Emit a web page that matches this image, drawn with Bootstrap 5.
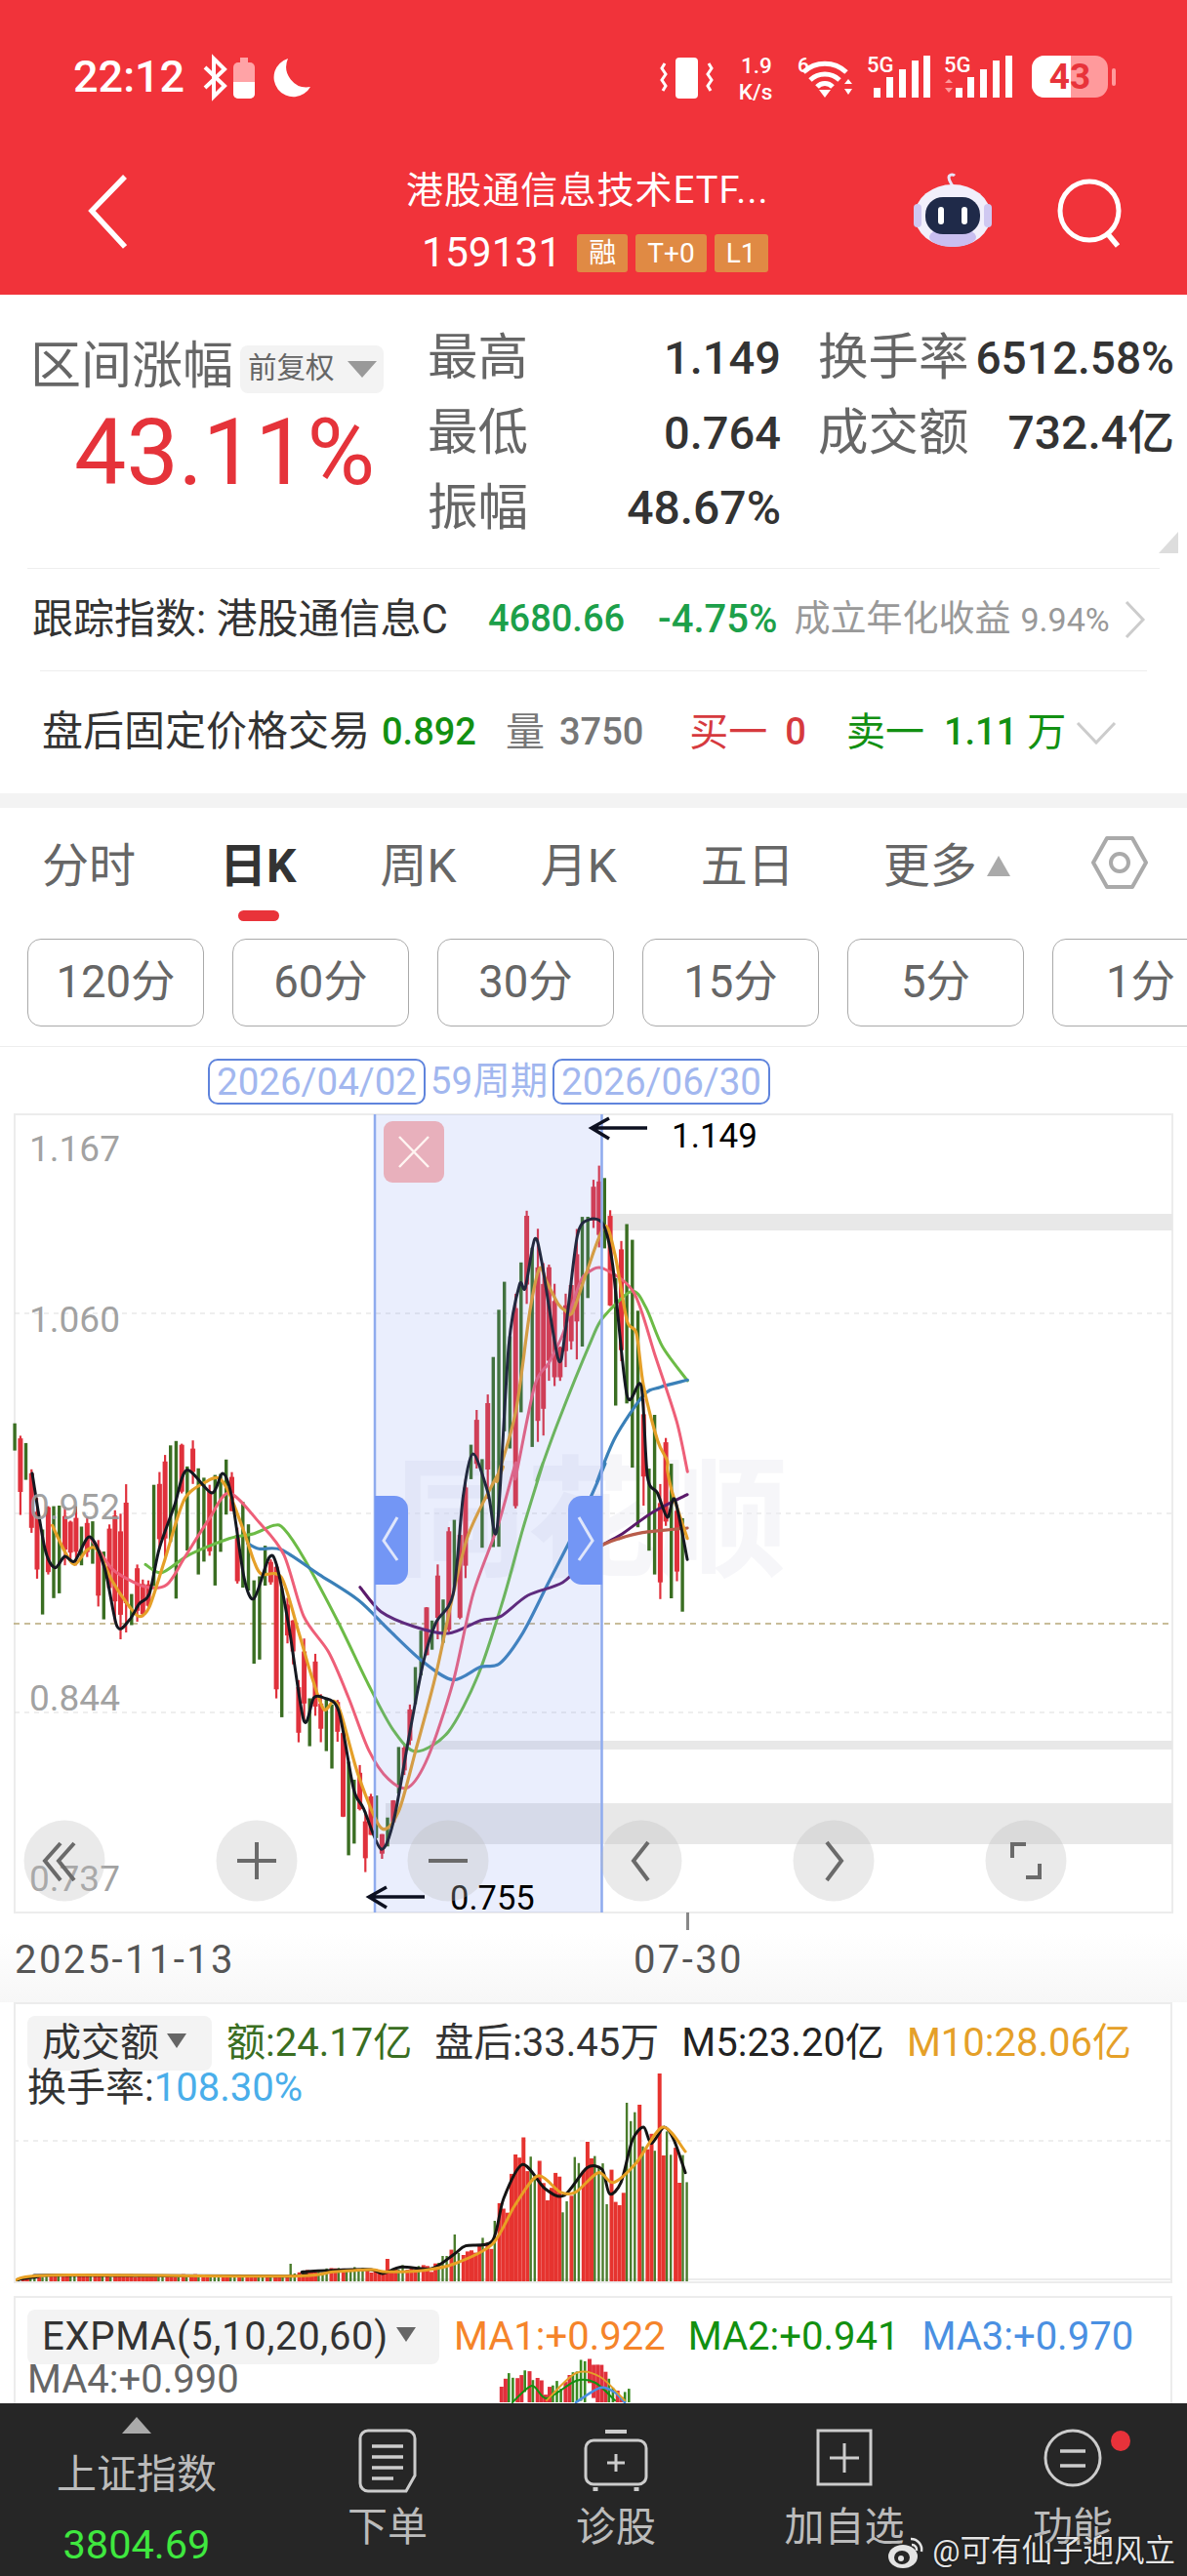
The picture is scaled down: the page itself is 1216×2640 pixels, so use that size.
<!doctype html>
<html lang="zh"><head><meta charset="utf-8">
<title>港股通信息技术ETF</title>
<link href="https://cdn.jsdelivr.net/npm/bootstrap@5.3.0/dist/css/bootstrap.min.css" rel="stylesheet">
<style>
html,body{margin:0;background:#fff}
body{width:1216px;height:2640px;overflow:hidden;font-family:Roboto,"Noto Sans CJK SC",sans-serif;color:#333;line-height:1.2}
svg{display:block}
.app-head{height:302px;background:#f1333a;color:#fff}
.status-row{padding:52px 68px 0 75px;height:106px}
.clock{font-size:45px;font-weight:500;margin-right:14px;line-height:50px}
.title-row{padding-left:90px;margin-top:67px}
.back-ico{margin-right:286px;margin-top:5px}
.title-box{width:374px}
.stock-name{font-size:38px;line-height:44px;white-space:nowrap;height:44px;letter-spacing:1.1px}
.code-line{margin-top:22px;padding-left:16px;gap:8px;height:40px}
.code-num{font-size:42.5px;line-height:40px;margin-right:8px}
.tag-box{background:#e08a44;border-radius:3px;font-size:28px;height:39px;line-height:39px;padding:0 12px}
.robot-ico{margin-left:144px;margin-top:4px}
.search-ico{margin-left:63px;margin-top:10px}
.stat-panel{height:280px;position:relative}
.stat-left{width:438px;padding:47px 0 0 31px}
.range-title{font-size:52px;line-height:54px;color:#666;white-space:nowrap}
.fq-pill{background:#f3f3f3;border-radius:8px;height:49px;width:147px;margin-left:7px;font-size:29.5px;color:#666;padding-left:8px;gap:13px;margin-top:4px}
.tri-d{width:0;height:0;border-left:15px solid transparent;border-right:15px solid transparent;border-top:17px solid #999}
.range-val{font-size:95px;line-height:100px;color:#e5333a;margin-top:11px;padding-left:45px}
.stat-grid{display:grid;grid-template-columns:362px 365px;column-gap:38px;grid-auto-rows:77px;padding-top:26px}
.stat-cell{display:flex;justify-content:space-between;align-items:center}
.stat-k{font-size:51.5px;color:#666;line-height:1}
.stat-v{font-size:47px;font-weight:500;color:#333;line-height:1}
.stat-v2{font-size:46px}
.stat-v3{font-size:48px}
.corner{position:absolute;right:9px;bottom:15px;width:0;height:0;border-left:20px solid transparent;border-bottom:22px solid #ddd}
.hair1{height:1px;background:#eee;margin:0 28px}
.hair2{height:1px;background:#eee;margin:0 41px}
.track-row{height:104px;padding-left:33px;white-space:nowrap}
.t41{font-size:42px;color:#333}
.val38{font-size:38px;font-weight:500}
.c-up{color:#1ca04a}.c-dk{color:#129012}.c-rd{color:#d63a3e}.c-mut{color:#777}
.fade37{font-size:37px;color:#999}.fade32{font-size:34px;color:#999}
.late-row{height:125px;padding-left:43px;white-space:nowrap}
.band{height:15px;background:#f3f3f3}
.tab-row{padding:31px 0 0 43px;gap:86px;height:101px;font-size:48px;color:#666;white-space:nowrap;position:relative}
.tab-on{color:#333;font-weight:700;position:relative}
.tab-on i{position:absolute;left:19px;top:74px;width:42px;height:11px;border-radius:6px;background:#e9333a}
.tri-u{display:inline-block;width:0;height:0;border-left:12px solid transparent;border-right:12px solid transparent;border-bottom:21px solid #aaa;margin-left:10px;vertical-align:6px}
.gear-ico{position:absolute;left:1118px;top:28px}
.period-row{padding-left:28px;gap:29px;overflow:hidden;height:111px;border-bottom:1px solid #eee;margin-top:33px;padding-bottom:21px;box-sizing:border-box}
.period-btn{flex:0 0 181px;height:90px;border:1px solid #aaa;border-radius:14px;font-size:45.5px;color:#666;background:#fff}
.range-row{height:67px;padding:12px 0 0 213px;font-size:38px;color:#a2b7ef;white-space:nowrap}
.date-pill{border:2px solid #5f84dc;border-radius:10px;height:47px;line-height:44px;width:223px;text-align:center;font-size:38.5px}
.cycle-txt{width:130px;text-align:center;line-height:46px;font-size:38.5px}
.axis-row{height:72px;background:linear-gradient(#fff,#f7f7f7);padding-left:15px;font-size:40px;color:#555;letter-spacing:2.4px;white-space:nowrap;line-height:58px}
.axis-end{margin-left:408px}
.sub-panel{position:relative;margin:0 15px 13px 14px;border:2px solid #ececec;overflow:hidden;background:#fff}
.sub-vol{height:288px}
.sub-ema{height:110px;border-bottom:0;margin-bottom:0}
.sub-art{position:absolute;left:-2px;top:-2px}
.sub-txt{position:relative;padding:12px 0 0 12px;font-size:40px;white-space:nowrap;line-height:1.2}
.sel-pill{background:#f3f3f3;border-radius:8px;height:56px;padding-left:15px;color:#333;gap:8px}
.sel-vol{width:189px}
.sel-ema{width:422px;letter-spacing:.7px}
.tri-s{width:0;height:0;border-left:10px solid transparent;border-right:10px solid transparent;border-top:15px solid #666;margin-bottom:6px}
.leg-row{gap:23px}
.g1{color:#3a6e22}.o1{color:#e5a028}.b1{color:#4aaeea}.k1{color:#222}
.o2{color:#f5842a}.g2{color:#129010}.b2{color:#4a90e2}.m2{color:#666}
.dock{height:179px;background:#262626;color:#bbb;display:grid;grid-template-columns:280px repeat(4,234px);position:relative;font-size:41px}
.dock-a{text-align:center;padding-top:14px}
.dock-tri{width:0;height:0;margin:0 auto;border-left:15px solid transparent;border-right:15px solid transparent;border-bottom:17px solid #aaa}
.dock-name{margin-top:17px;line-height:50px}
.dock-num{color:#3fe83f;font-size:41.5px;line-height:50px;margin-top:22px}
.dock-b{text-align:center;padding-top:26px}
.dock-b svg{margin:0 auto}
.dock-lbl{line-height:50px;margin-top:10px}
.wm{position:absolute;right:12px;bottom:8px;color:#e4e4e4;font-size:31.5px;gap:8px;white-space:nowrap;text-shadow:0 0 2px #000}
</style></head>
<body>
<header class="app-head">
  <div class="status-row d-flex justify-content-between align-items-center">
    <div class="d-flex align-items-center">
      <span class="clock">22:12</span>
      <svg width="120" height="50" viewBox="212 52 120 50">
        <path d="M219 67l20 19-11 11V58l11 11-20 19" fill="none" stroke="#fff" stroke-width="4"/>
        <rect x="248" y="62" width="22" height="37" rx="5" fill="#ffa3a6"/><path d="M248 82h22v12a5 5 0 0 1-5 5h-12a5 5 0 0 1-5-5z" fill="#fff"/><rect x="255" y="57" width="8" height="5" fill="#ffa3a6"/>
        <path d="M304 58a20 20 0 1 0 23 29 21 21 0 0 1-23-29z" fill="#fff"/>
      </svg>
    </div>
    <svg width="472" height="54" viewBox="676 50 472 54" font-family="Roboto" fill="#fff">
      <rect x="692" y="57" width="23" height="42" rx="4" fill="#fff"/>
      <path d="M681 63l-3 5 4 6-4 6 4 6-3 5M726 63l3 5-4 6 4 6-4 6 3 5" fill="none" stroke="#fff" stroke-width="3"/>
      <text x="775" y="73" font-size="22.5" font-weight="500" text-anchor="middle">1.9</text>
      <text x="774" y="100" font-size="22.5" font-weight="500" text-anchor="middle">K/s</text>
      <text x="817" y="72" font-size="21" font-weight="500">6</text>
      <g fill="none" stroke="#fff" stroke-width="5"><path d="M823 72a32 32 0 0 1 44 0"/><path d="M830 80a22 22 0 0 1 30 0"/><path d="M837 87a11 11 0 0 1 16 0"/></g>
      <path d="M839 90h12l-6 8z"/><path d="M865 84l4-5 4 5zM865 89l4 6 4-6z"/>
      <text x="888" y="72" font-size="22" font-weight="500">5G</text>
      <rect x="895" y="88" width="7" height="10"/><rect x="908" y="77" width="7" height="21"/><rect x="921" y="69" width="7" height="29"/><rect x="934" y="60" width="7" height="38"/><rect x="946" y="55" width="7" height="43"/>
      <text x="967" y="72" font-size="22" font-weight="500">5G</text>
      <path d="M968 83l4-4 4 4zM968 88l4 5 4-5z" fill="#ff9a9c"/>
      <rect x="979" y="88" width="7" height="10"/><rect x="991" y="77" width="7" height="21"/><rect x="1004" y="69" width="7" height="29"/><rect x="1017" y="60" width="7" height="38"/><rect x="1030" y="55" width="7" height="43"/>
      <rect x="1057" y="55" width="78" height="43" rx="13" fill="#ff9a9c"/>
      <path d="M1070 55h27v43h-27a13 13 0 0 1-13-13V68a13 13 0 0 1 13-13z"/>
      <rect x="1139" y="68" width="4" height="18" rx="2" fill="#ff9a9c"/>
      <text x="1096" y="89" font-size="37" font-weight="700" fill="#e8333a" text-anchor="middle">43</text>
    </svg>
  </div>
  <div class="title-row d-flex align-items-start">
    <svg class="back-ico" width="40" height="78" viewBox="0 0 40 78"><path d="M38 3L4 38l34 37" fill="none" stroke="#fff" stroke-width="5.5"/></svg>
    <div class="title-box">
      <div class="stock-name">港股通信息技术ETF...</div>
      <div class="code-line d-flex align-items-center"><span class="code-num">159131</span><span class="tag-box">融</span><span class="tag-box">T+0</span><span class="tag-box">L1</span></div>
    </div>
    <svg class="robot-ico" width="84" height="76" viewBox="0 0 84 76">
      <path d="M42 14c-2-4-4-6-4-9s4-4 6-2" fill="none" stroke="#e9e4f8" stroke-width="3"/>
      <ellipse cx="42" cy="44" rx="39" ry="32" fill="#f1effb"/><ellipse cx="42" cy="66" rx="24" ry="10" fill="#c9bff0"/>
      <rect x="2" y="32" width="8" height="24" rx="4" fill="#cfc8f1"/><rect x="74" y="32" width="8" height="24" rx="4" fill="#cfc8f1"/>
      <rect x="14" y="25" width="56" height="38" rx="18" fill="#1f2a49"/>
      <rect x="27" y="35" width="6" height="18" rx="3" fill="#fff"/><rect x="51" y="35" width="6" height="18" rx="3" fill="#fff"/>
    </svg>
    <svg class="search-ico" width="70" height="72" viewBox="0 0 70 72"><circle cx="35" cy="33" r="30" fill="none" stroke="#fff" stroke-width="5"/><path d="M54 57l10 12" stroke="#fff" stroke-width="5.5"/></svg>
  </div>
</header>

<section class="stat-panel d-flex">
  <div class="stat-left">
    <div class="d-flex align-items-center"><span class="range-title">区间涨幅</span><div class="fq-pill d-flex align-items-center"><span>前复权</span><i class="tri-d"></i></div></div>
    <div class="range-val">43.11%</div>
  </div>
  <div class="stat-grid">
    <div class="stat-cell"><span class="stat-k">最高</span><span class="stat-v">1.149</span></div>
    <div class="stat-cell"><span class="stat-k">换手率</span><span class="stat-v stat-v2">6512.58%</span></div>
    <div class="stat-cell"><span class="stat-k">最低</span><span class="stat-v">0.764</span></div>
    <div class="stat-cell"><span class="stat-k">成交额</span><span class="stat-v stat-v3">732.4亿</span></div>
    <div class="stat-cell"><span class="stat-k">振幅</span><span class="stat-v stat-v3">48.67%</span></div>
  </div>
  <i class="corner"></i>
</section>
<div class="hair1"></div>
<div class="track-row d-flex align-items-center">
  <span class="t41">跟踪指数: 港股通信息C</span>
  <span class="val38 c-up" style="margin-left:41px">4680.66</span>
  <span class="val38 c-up" style="margin-left:34px;font-size:40px">-4.75%</span>
  <span class="fade37" style="margin-left:17px">成立年化收益</span>
  <span class="fade32" style="margin-left:10px">9.94%</span>
  <svg width="26" height="40" viewBox="0 0 26 40" style="margin-left:13px"><path d="M4 2l17 18L4 38" fill="none" stroke="#ccc" stroke-width="3"/></svg>
</div>
<div class="hair2"></div>
<div class="late-row d-flex align-items-center">
  <span class="t41">盘后固定价格交易</span>
  <span class="val38 c-dk" style="margin-left:12px">0.892</span>
  <span class="c-mut" style="font-size:40px;margin-left:30px">量</span>
  <span class="val38 c-mut" style="margin-left:15px">3750</span>
  <span class="c-rd" style="font-size:40px;margin-left:47px">买一</span>
  <span class="val38 c-rd" style="margin-left:18px">0</span>
  <span class="c-dk" style="font-size:40px;margin-left:41px">卖一</span>
  <span class="val38 c-dk" style="margin-left:20px">1.11</span>
  <span class="c-dk" style="font-size:40px;margin-left:10px">万</span>
  <svg width="42" height="28" viewBox="0 0 42 28" style="margin-left:10px"><path d="M2 4l19 20L40 4" fill="none" stroke="#ccc" stroke-width="3"/></svg>
</div>
<div class="band"></div>
<nav class="tab-row d-flex">
  <span>分时</span><span class="tab-on">日K<i></i></span><span>周K</span><span>月K</span><span>五日</span><span style="margin-left:5px">更多<i class="tri-u"></i></span>
  <svg class="gear-ico" width="58" height="56" viewBox="0 0 58 56"><path d="M16 3h26l14 25-14 25H16L2 28z" fill="none" stroke="#aaa" stroke-width="4" stroke-linejoin="round"/><circle cx="29" cy="28" r="9" fill="none" stroke="#aaa" stroke-width="4"/></svg>
</nav>
<div class="period-row d-flex">
  <button class="period-btn">120分</button><button class="period-btn">60分</button><button class="period-btn">30分</button><button class="period-btn">15分</button><button class="period-btn">5分</button><button class="period-btn">1分</button>
</div>
<div class="range-row d-flex"><span class="date-pill">2026/04/02</span><span class="cycle-txt">59周期</span><span class="date-pill">2026/06/30</span></div>

<svg id="kchart" width="1216" height="840" viewBox="0 1140 1216 840" font-family="Roboto"></svg>
<div class="axis-row"><span>2025-11-13</span><span class="axis-end">07-30</span></div>

<section class="sub-panel sub-vol">
  <svg id="volart" class="sub-art" width="1187" height="288" viewBox="14 2052 1187 288"></svg>
  <div class="sub-txt">
    <div class="d-flex leg-row align-items-center"><div class="sel-pill sel-vol d-flex align-items-center"><span>成交额</span><i class="tri-s"></i></div><span class="g1" style="margin-left:-8px">额:24.17亿</span><span>盘后:33.45万</span><span class="k1">M5:23.20亿</span><span class="o1">M10:28.06亿</span></div>
    <div style="margin-top:-6px;line-height:48px">换手率:<span class="b1">108.30%</span></div>
  </div>
</section>
<section class="sub-panel sub-ema">
  <svg id="emaart" class="sub-art" width="1187" height="110" viewBox="14 2353 1187 110"></svg>
  <div class="sub-txt">
    <div class="d-flex leg-row align-items-center"><div class="sel-pill sel-ema d-flex align-items-center"><span>EXPMA(5,10,20,60)</span><i class="tri-s"></i></div><span class="o2" style="margin-left:-8px">MA1:+0.922</span><span class="g2">MA2:+0.941</span><span class="b2">MA3:+0.970</span></div>
    <div class="m2" style="margin-top:-8px;line-height:48px">MA4:+0.990</div>
  </div>
</section>

<footer class="dock">
  <div class="dock-a"><div class="dock-tri"></div><div class="dock-name">上证指数</div><div class="dock-num">3804.69</div></div>
  <div class="dock-b"><svg width="60" height="66" viewBox="0 0 60 66"><path d="M10 2h40a8 8 0 0 1 8 8v38l-9 16H10a8 8 0 0 1-8-8V10a8 8 0 0 1 8-8z" fill="none" stroke="#ccc" stroke-width="3"/><path d="M14 18h32M14 29h32M14 40h32M14 51h22" stroke="#ccc" stroke-width="3.5"/></svg><div class="dock-lbl">下单</div></div>
  <div class="dock-b"><svg width="66" height="66" viewBox="0 0 66 66"><path d="M22 3h22" stroke="#ccc" stroke-width="4"/><rect x="2" y="12" width="62" height="45" rx="8" fill="none" stroke="#ccc" stroke-width="3"/><path d="M33 26v18M24 35h18" stroke="#ccc" stroke-width="3"/><path d="M12 60v4M54 60v4" stroke="#ccc" stroke-width="5"/></svg><div class="dock-lbl">诊股</div></div>
  <div class="dock-b"><svg width="58" height="66" viewBox="0 0 58 66"><rect x="2" y="2" width="54" height="55" fill="none" stroke="#ccc" stroke-width="3"/><path d="M29 15v30M14 30h30" stroke="#ccc" stroke-width="3"/></svg><div class="dock-lbl">加自选</div></div>
  <div class="dock-b"><svg width="60" height="66" viewBox="0 0 60 66"><circle cx="30" cy="30" r="28" fill="none" stroke="#ccc" stroke-width="3"/><path d="M17 23h26M17 38h26" stroke="#ccc" stroke-width="3.5"/></svg><div class="dock-lbl">功能</div></div>
  <i class="position-absolute rounded-circle" style="left:1138px;top:28px;width:20px;height:21px;background:#e8323a"></i>
  <div class="wm d-flex align-items-center">
    <svg width="38" height="36" viewBox="0 0 38 36"><ellipse cx="16" cy="23" rx="15" ry="12" fill="#e4e4e4"/><ellipse cx="15" cy="24" rx="8" ry="7" fill="#262626"/><circle cx="14" cy="25" r="3" fill="#e4e4e4"/><path d="M24 5a11 11 0 0 1 11 13M25 11a5 5 0 0 1 5 6" fill="none" stroke="#e4e4e4" stroke-width="2.5"/></svg>
    <span>@可有仙子迎风立</span>
  </div>
</footer>

<script>
(function(){
var seed=2026;function R(){seed=(seed*1664525+1013904223)%4294967296;return seed/4294967296}
function A(a){var o=[];for(var i=0;i<a.length;i+=2)o.push([a[i]/1.96,1500+a[i+1]/3]);return o}
function B(a){var o=[];for(var i=0;i<a.length;i+=2)o.push([a[i]/2.063,1070+a[i+1]/3]);return o}
function C(a){var o=[];for(var i=0;i<a.length;i+=2)o.push([a[i]/1.289,2020+a[i+1]/3]);return o}
function smooth(pts,col,w){var d='M'+pts[0][0].toFixed(1)+' '+pts[0][1].toFixed(1);
 for(var i=0;i<pts.length-1;i++){var p0=pts[i-1]||pts[i],p1=pts[i],p2=pts[i+1],p3=pts[i+2]||p2;
  d+='C'+(p1[0]+(p2[0]-p0[0])/7).toFixed(1)+' '+(p1[1]+(p2[1]-p0[1])/7).toFixed(1)+' '+(p2[0]-(p3[0]-p1[0])/7).toFixed(1)+' '+(p2[1]-(p3[1]-p1[1])/7).toFixed(1)+' '+p2[0].toFixed(1)+' '+p2[1].toFixed(1)}
 return '<path d="'+d+'" fill="none" stroke="'+col+'" stroke-width="'+w+'" stroke-linejoin="round" stroke-linecap="round"/>'}
function lerp(t,x){if(x<=t[0][0])return t[0][1];for(var i=1;i<t.length;i++)if(x<=t[i][0]){var a=t[i-1],b=t[i];return a[1]+(b[1]-a[1])*(x-a[0])/(b[0]-a[0]||1)}return t[t.length-1][1]}

var black=[[33,1510]].concat(A([90,260,110,320,130,285,150,300,180,225,210,320,235,500,260,480,280,430,300,400,320,260,350,130,375,20,425,90,447,30,465,100,490,350,510,415,540,290,555,310,580,500,610,790,630,720,650,720,680,760,710,1000,730,1060,765,1185,790,1100,820,850,850,610,875,490,910,400,930,100,950,-30,980,90,998,200]),
 B([1075,930,1098,740,1110,750,1130,600,1145,670,1180,970,1195,880,1220,590,1245,540,1275,555,1295,680,1325,1080,1355,1050]),A([1300,40,1320,90,1340,165,1355,110,1380,295]));
var orange=A([105,190,130,270,150,310,175,265,195,265,225,360,260,440,280,470,300,440,330,300,370,110,415,55,440,45,460,90,490,210,510,300,525,340,565,350,600,520,625,650,650,755,670,730,685,770,720,960,765,1120,800,1070,835,880,875,650,910,400,940,220,985,75,1010,10]).concat(B([1050,1340,1090,1130,1120,820,1140,690,1155,730,1180,800,1195,820,1210,825,1240,700,1278,560,1300,650,1325,850,1345,890,1360,1050,1390,1220,1410,1280]),A([1340,20,1350,90,1380,230]));
var pink=A([180,225,200,270,230,330,290,378,335,372,370,290,420,170,460,90,520,180,570,280,610,470,660,580,700,720,740,880,780,970,820,995,860,900,910,670,950,400,1000,190,1035,0]).concat(B([1090,1330,1130,1050,1160,980,1190,890,1225,735,1245,700,1275,690,1340,765,1385,960,1430,1160,1453,1315]));
var green=A([292,310,325,335,380,280,460,230,510,215,550,190,570,200,610,290,680,490,740,680,790,820,835,885,900,825,960,650,1010,420,1050,200,1090,0]).concat(B([1135,1340,1180,1160,1250,910,1275,840,1335,760,1365,810,1400,930,1453,1035]));
var blue=A([497,245,520,262,565,265,640,340,720,420,780,510,850,610,910,665,965,625,1003,615,1050,520,1100,370,1150,220,1190,90,1215,0]).concat(B([1262,1345,1300,1210,1360,1080,1395,1055,1453,1033]));
var purple=A([723,380,765,455,830,500,900,522,965,482,1005,470,1060,405,1130,365,1180,290,1210,250,1250,215,1310,150,1380,95]);
var brown=A([1155,295,1210,250,1240,232,1290,212,1380,198]);
var mid=[[14,1470]].concat(black);
var top=[[14,1447],[30,1500],[60,1520],[90,1560],[120,1530],[182,1465],[227,1482],[261,1566],[320,1684],[362,1802],[396,1835],[430,1667],[480,1482],[514,1320],[539,1215],[598,1179],[615,1195],[648,1260],[674,1448],[704,1530]];
var bot=[[14,1530],[43,1663],[76,1627],[116,1690],[153,1650],[240,1633],[252,1690],[296,1780],[311,1812],[332,1800],[352,1898],[376,1923],[395,1847],[434,1707],[459,1687],[500,1627],[567,1453],[608,1360],[668,1650],[704,1673]];

var s='<rect x="15" y="1142" width="1186" height="818" fill="#fff" stroke="#ececec" stroke-width="2"/>';
[1346,1551,1755].forEach(function(y){s+='<line x1="15" x2="1201" y1="'+y+'" y2="'+y+'" stroke="#ddd" stroke-dasharray="5 5"/>'});
s+='<line x1="14" x2="1201" y1="1664" y2="1664" stroke="#b7a878" stroke-width="1.5" stroke-dasharray="6 5"/>';
s+='<rect x="622" y="1244" width="579" height="17" fill="#e8e8e8"/><rect x="440" y="1784" width="761" height="9" fill="#e8e8e8"/><rect x="395" y="1848" width="806" height="42" fill="#e8e8e8"/>';
s+='<text x="405" y="1605" font-family="Noto Sans CJK SC" font-weight="700" font-size="134" fill="#ececf3" opacity=".45">同花顺</text>';
for(var x=15;x<=704;x+=5.7){var m=lerp(mid,x),t=lerp(top,x),b=lerp(bot,x);
 var up=R()>.5,col=up?'#e0313c':'#3a6e22';
 var f=R();
 var hi=(f<.55)?m+(Math.min(t,m)-m)*(.6+.4*R()):m+(Math.min(t,m)-m)*.35*R();
 var lo=(f>.45)?m+(Math.max(b,m)-m)*(.55+.45*R()):m+(Math.max(b,m)-m)*.35*R();
 if(lo-hi<22){lo+=12;hi-=10}
 var bw=up?5:3.6;
 if(up){var bt=hi+(lo-hi)*R()*.2,bb=lo-(lo-hi)*R()*.3;
  s+='<rect x="'+(x-.9).toFixed(1)+'" y="'+hi.toFixed(1)+'" width="2.2" height="'+(lo-hi).toFixed(1)+'" fill="'+col+'"/>';
  s+='<rect x="'+(x-bw/2+.2).toFixed(1)+'" y="'+bt.toFixed(1)+'" width="'+bw+'" height="'+(bb-bt).toFixed(1)+'" fill="'+col+'"/>';
 }else{s+='<rect x="'+(x-1.6).toFixed(1)+'" y="'+hi.toFixed(1)+'" width="3.4" height="'+(lo-hi).toFixed(1)+'" fill="'+col+'"/>';}
}
s+=smooth(green,'#6cbb46',3)+smooth(blue,'#3a80b8',3.2)+smooth(purple,'#5b1a6a',3)+smooth(brown,'#b85c4a',3.2)+smooth(pink,'#ee5f78',3)+smooth(orange,'#e5a028',3.2)+smooth(black,'#141820',3);
s+='<g font-size="37" fill="#999" fill-opacity=".92">';[[1191,'1.167'],[1366,'1.060'],[1558,'0.952'],[1754,'0.844'],[1939,'0.737']].forEach(function(l){s+='<text x="30" y="'+(l[0]-1)+'">'+l[1]+'</text>'});s+='</g>';
s+='<rect x="384" y="1142" width="233" height="818" fill="#6f8ff2" fill-opacity=".15"/><path d="M384 1142v818M616.5 1142v818" stroke="#8fabee" stroke-width="2.5"/>';
s+='<rect x="393" y="1149" width="62" height="63" rx="9" fill="#e8b0bc"/><path d="M409 1165l30 31M439 1165l-30 31" stroke="#fff5f2" stroke-width="2.5"/>';
s+='<path d="M384 1533h20a14 14 0 0 1 14 14v63a14 14 0 0 1-14 14h-20z" fill="#7396f5"/><path d="M617 1533h-21a14 14 0 0 0-14 14v63a14 14 0 0 0 14 14h21z" fill="#7396f5"/>';
s+='<path d="M407 1555l-14 24 14 20M593 1555l14 24-14 20" fill="none" stroke="#dfe6fb" stroke-width="3"/>';
s+='<path d="M663 1156h-57M624 1146l-18 10 18 11" fill="none" stroke="#0d1020" stroke-width="3.5"/><text x="688" y="1176" font-size="35">1.149</text>';
s+='<path d="M435 1944h-57M396 1934l-18 10 18 11" fill="none" stroke="#0d1020" stroke-width="3.5"/><text x="461" y="1957" font-size="34.5">0.755</text>';
[66,263,459,657,854,1051].forEach(function(cx){s+='<circle cx="'+cx+'" cy="1907" r="41.5" fill="#bbb" fill-opacity=".3"/>'});
s+='<g fill="none" stroke="#6a6a6a" stroke-width="4"><path d="M62 1889l-16 18 16 20M76 1889l-16 18 16 20M243 1907h40M263 1888v38M439 1907h40"/><path d="M664 1888l-15 19 15 20M847 1888l15 19-15 20M1037 1904v-14h14M1065 1910v14h-14"/></g>';
s+='<rect x="703" y="1960" width="3" height="18" fill="#888"/>';
document.getElementById('kchart').innerHTML=s;

var vb=C([20,950,50,940,70,935,380,938,400,925,440,920,490,918,505,930,530,910,570,915,600,870,615,845,650,830,665,700,690,595,720,670,745,690,775,605,795,610,805,685,820,650,835,520,850,480,860,530,877,480,890,520,905,620]);
var vo=C([20,950,70,935,380,938,440,925,490,918,510,925,560,920,600,900,650,840,680,720,710,630,740,680,760,680,790,620,810,650,840,590,875,480,905,555]);
var v='<line x1="14" x2="1201" y1="2194" y2="2194" stroke="#ddd" stroke-dasharray="5 5"/><line x1="14" x2="1201" y1="2336" y2="2336" stroke="#ececec" stroke-width="2"/>';
var spikes=[[675,2125],[643,2155],[655,2157],[600,2195],[527,2208],[465,2290],[396,2315],[299,2320]];
for(var vx=15;vx<=704;vx+=4.1){var ty=lerp(vb,vx)+(R()-.5)*Math.min(60,(2338-lerp(vb,vx))*.55);
 spikes.forEach(function(k){if(Math.abs(k[0]-vx)<2.05)ty=k[1]});
 ty=Math.min(ty,2335);
 var red=R()>.42;v+='<rect x="'+(vx-1.4).toFixed(1)+'" y="'+ty.toFixed(1)+'" width="'+(red?4:2.4)+'" height="'+(2338-ty).toFixed(1)+'" fill="'+(red?'#e6332f':'#4a7c2c')+'"/>';}
v+=smooth(vb,'#141414',3)+smooth(vo,'#e8a024',3);
document.getElementById('volart').innerHTML=v;

var et=[[512,2435],[535,2420],[558,2443],[578,2437],[598,2412],[620,2417],[636,2450],[648,2437]];
var e='';for(var ex=513;ex<=648;ex+=4.1){var ey=lerp(et,ex)+R()*14;var lo2=Math.min(2462,ey+20+R()*40);var red2=R()>.45;e+='<rect x="'+(ex-1.2).toFixed(1)+'" y="'+ey.toFixed(1)+'" width="'+(red2?4:2.6)+'" height="'+(lo2-ey).toFixed(1)+'" fill="'+(red2?'#e0313c':'#3a8a22')+'"/>';}
e+=smooth([[525,2462],[545,2445],[560,2458],[590,2440],[610,2442],[630,2460]],'#129010',2)+smooth([[590,2462],[615,2447],[630,2452],[640,2462]],'#4a90e2',2.5)+smooth([[560,2460],[590,2432],[615,2436],[640,2460]],'#e5a028',2);
document.getElementById('emaart').innerHTML=e;
})();
</script>
<script src="https://cdn.jsdelivr.net/npm/bootstrap@5.3.0/dist/js/bootstrap.bundle.min.js"></script>
</body></html>
